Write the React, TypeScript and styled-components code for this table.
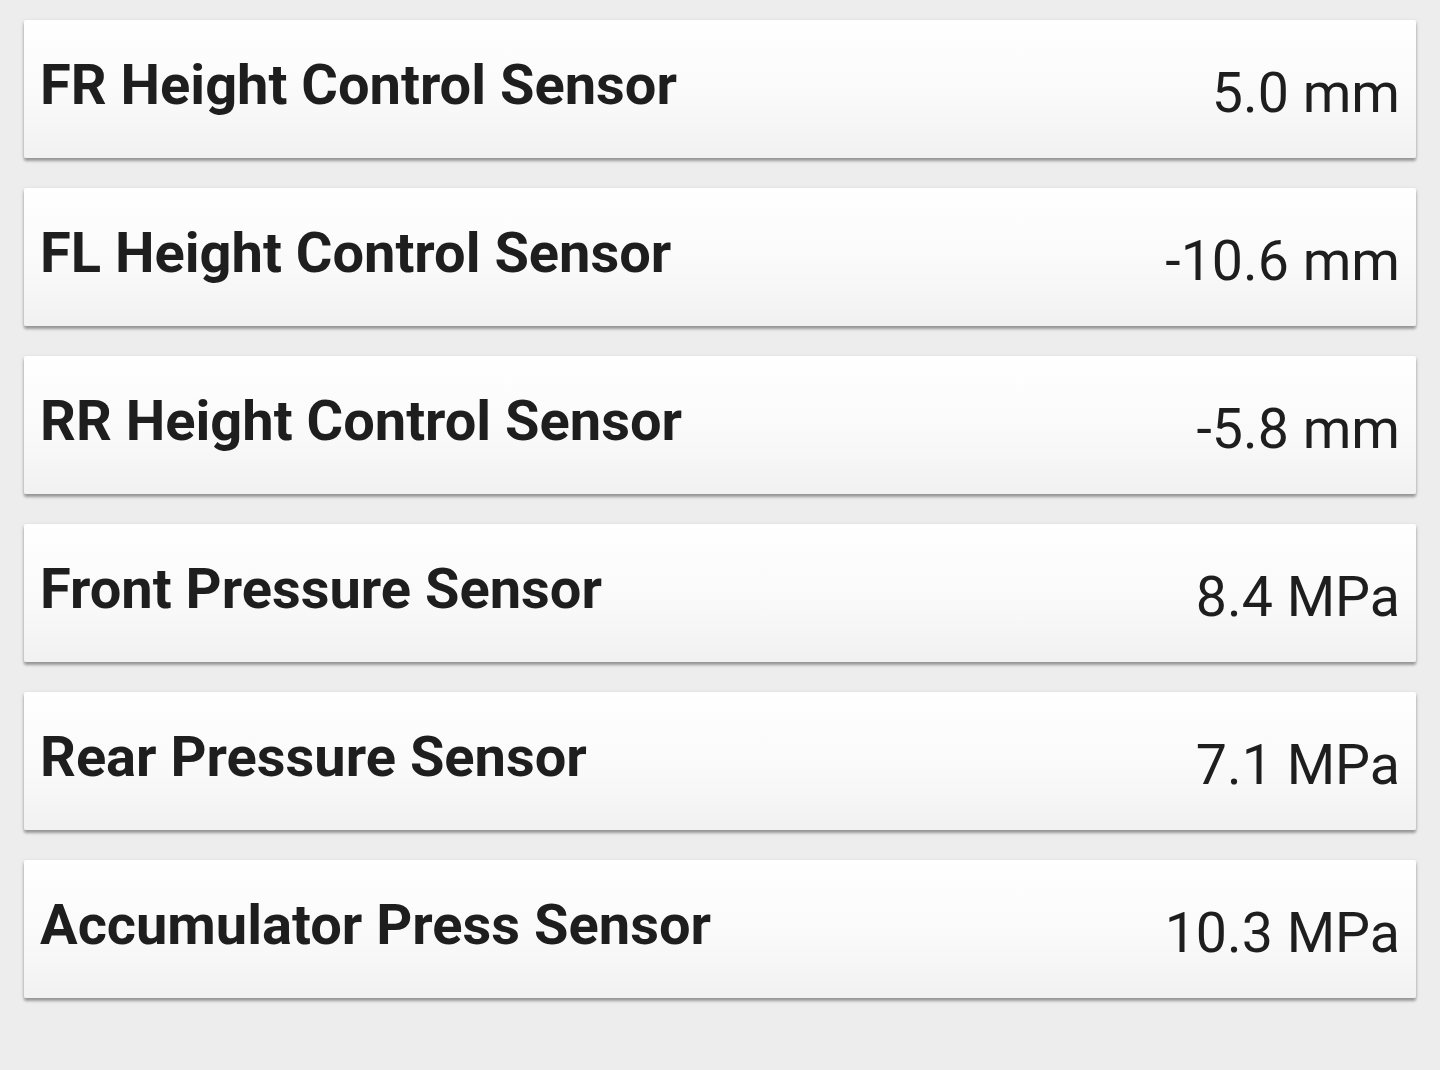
import React from "react";
import styled, { createGlobalStyle } from "styled-components";

const Global = createGlobalStyle`
  html, body { margin: 0; padding: 0; background: #ededed; }
  body { font-family: Roboto, "Noto Sans", sans-serif; }
`;

const Page = styled.div`
  width: 1440px;
  height: 1070px;
  box-sizing: border-box;
  padding: 20px 24px 0 24px;
  background: #ededed;
  display: flex;
  flex-direction: column;
  gap: 30px;
`;

const Card = styled.div`
  height: 138px;
  box-sizing: border-box;
  border-radius: 2px;
  background: linear-gradient(#ffffff 0%, #f9f9f9 60%, #f1f1f1 100%);
  box-shadow: 0 3px 3px rgba(0, 0, 0, 0.32), 0 1px 4px rgba(0, 0, 0, 0.12);
  display: flex;
  justify-content: space-between;
  align-items: center;
  padding: 0 16px 0 16px;
`;

const Label = styled.span`
  font-family: Roboto, sans-serif;
  font-weight: 700;
  font-size: 56px;
  color: #1e1e1e;
  margin-top: -8px;
`;

const Value = styled.span`
  font-family: Roboto, sans-serif;
  font-weight: 400;
  font-size: 55.5px;
  color: #1e1e1e;
  margin-top: 8px;
`;

const rows = [
  ["FR Height Control Sensor", "5.0 mm"],
  ["FL Height Control Sensor", "-10.6 mm"],
  ["RR Height Control Sensor", "-5.8 mm"],
  ["Front Pressure Sensor", "8.4 MPa"],
  ["Rear Pressure Sensor", "7.1 MPa"],
  ["Accumulator Press Sensor", "10.3 MPa"],
];

export default function App() {
  return (
    <>
      <Global />
      <Page>
        {rows.map(([l, v]) => (
          <Card key={l}>
            <Label>{l}</Label>
            <Value>{v}</Value>
          </Card>
        ))}
      </Page>
    </>
  );
}
